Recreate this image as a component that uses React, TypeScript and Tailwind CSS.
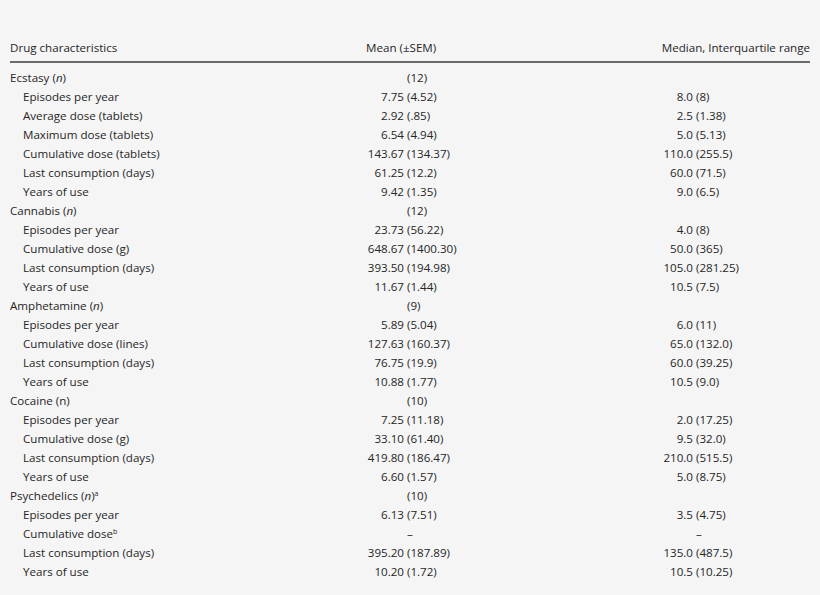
import React from 'react';

type Row = {
  label: React.ReactNode;
  sub?: boolean;
  mean?: [string, string] | 'dash';
  median?: [string, string] | 'dash';
};

const n = <i>n</i>;

const rows: Row[] = [
  { label: <>Ecstasy ({n})</>, mean: ['', '(12)'] },
  { label: 'Episodes per year', sub: true, mean: ['7.75', '(4.52)'], median: ['8.0', '(8)'] },
  { label: 'Average dose (tablets)', sub: true, mean: ['2.92', '(.85)'], median: ['2.5', '(1.38)'] },
  { label: 'Maximum dose (tablets)', sub: true, mean: ['6.54', '(4.94)'], median: ['5.0', '(5.13)'] },
  { label: 'Cumulative dose (tablets)', sub: true, mean: ['143.67', '(134.37)'], median: ['110.0', '(255.5)'] },
  { label: 'Last consumption (days)', sub: true, mean: ['61.25', '(12.2)'], median: ['60.0', '(71.5)'] },
  { label: 'Years of use', sub: true, mean: ['9.42', '(1.35)'], median: ['9.0', '(6.5)'] },
  { label: <>Cannabis ({n})</>, mean: ['', '(12)'] },
  { label: 'Episodes per year', sub: true, mean: ['23.73', '(56.22)'], median: ['4.0', '(8)'] },
  { label: 'Cumulative dose (g)', sub: true, mean: ['648.67', '(1400.30)'], median: ['50.0', '(365)'] },
  { label: 'Last consumption (days)', sub: true, mean: ['393.50', '(194.98)'], median: ['105.0', '(281.25)'] },
  { label: 'Years of use', sub: true, mean: ['11.67', '(1.44)'], median: ['10.5', '(7.5)'] },
  { label: <>Amphetamine ({n})</>, mean: ['', '(9)'] },
  { label: 'Episodes per year', sub: true, mean: ['5.89', '(5.04)'], median: ['6.0', '(11)'] },
  { label: 'Cumulative dose (lines)', sub: true, mean: ['127.63', '(160.37)'], median: ['65.0', '(132.0)'] },
  { label: 'Last consumption (days)', sub: true, mean: ['76.75', '(19.9)'], median: ['60.0', '(39.25)'] },
  { label: 'Years of use', sub: true, mean: ['10.88', '(1.77)'], median: ['10.5', '(9.0)'] },
  { label: 'Cocaine (n)', mean: ['', '(10)'] },
  { label: 'Episodes per year', sub: true, mean: ['7.25', '(11.18)'], median: ['2.0', '(17.25)'] },
  { label: 'Cumulative dose (g)', sub: true, mean: ['33.10', '(61.40)'], median: ['9.5', '(32.0)'] },
  { label: 'Last consumption (days)', sub: true, mean: ['419.80', '(186.47)'], median: ['210.0', '(515.5)'] },
  { label: 'Years of use', sub: true, mean: ['6.60', '(1.57)'], median: ['5.0', '(8.75)'] },
  { label: <>Psychedelics ({n})<sup className="text-[7px]">a</sup></>, mean: ['', '(10)'] },
  { label: 'Episodes per year', sub: true, mean: ['6.13', '(7.51)'], median: ['3.5', '(4.75)'] },
  { label: <>Cumulative dose<sup className="text-[7px]">b</sup></>, sub: true, mean: 'dash', median: 'dash' },
  { label: 'Last consumption (days)', sub: true, mean: ['395.20', '(187.89)'], median: ['135.0', '(487.5)'] },
  { label: 'Years of use', sub: true, mean: ['10.20', '(1.72)'], median: ['10.5', '(10.25)'] },
];

const Split: React.FC<{ value?: [string, string] | 'dash'; leftW: string; rightW: string }> = ({ value, leftW, rightW }) => {
  if (value === 'dash') {
    return (
      <>
        <span className={`${leftW} shrink-0`} />
        <span className={`${rightW} shrink-0 pl-[3px]`}>–</span>
      </>
    );
  }
  return (
    <>
      <span className={`${leftW} shrink-0 text-right`}>{value ? value[0] : ''}</span>
      <span className={`${rightW} shrink-0 pl-[3px]`}>{value ? value[1] : ''}</span>
    </>
  );
};

export default function App() {
  return (
    <div
      className="w-[820px] h-[595px] bg-[#f5f5f5] text-[#262626] text-[11.6px] leading-[19px] pt-[38px] px-[10px] overflow-hidden"
      style={{ fontFamily: '"Open Sans", sans-serif' }}
    >
      <div className="flex">
        <span className="w-[356px] shrink-0">Drug characteristics</span>
        <span>Mean (±SEM)</span>
        <span className="ml-auto">Median, Interquartile range</span>
      </div>
      <div className="mt-[4px] h-[1.5px] bg-[#6b6b6b]" />
      <div className="mt-[5px]">
        {rows.map((r, i) => (
          <div key={i} className="flex h-[19px]">
            <span className={`w-[280px] shrink-0 ${r.sub ? 'pl-[13px]' : ''}`}>{r.label}</span>
            <Split value={r.mean} leftW="w-[114px]" rightW="w-[189px]" />
            <Split value={r.median} leftW="w-[100px]" rightW="w-[100px]" />
          </div>
        ))}
      </div>
    </div>
  );
}
